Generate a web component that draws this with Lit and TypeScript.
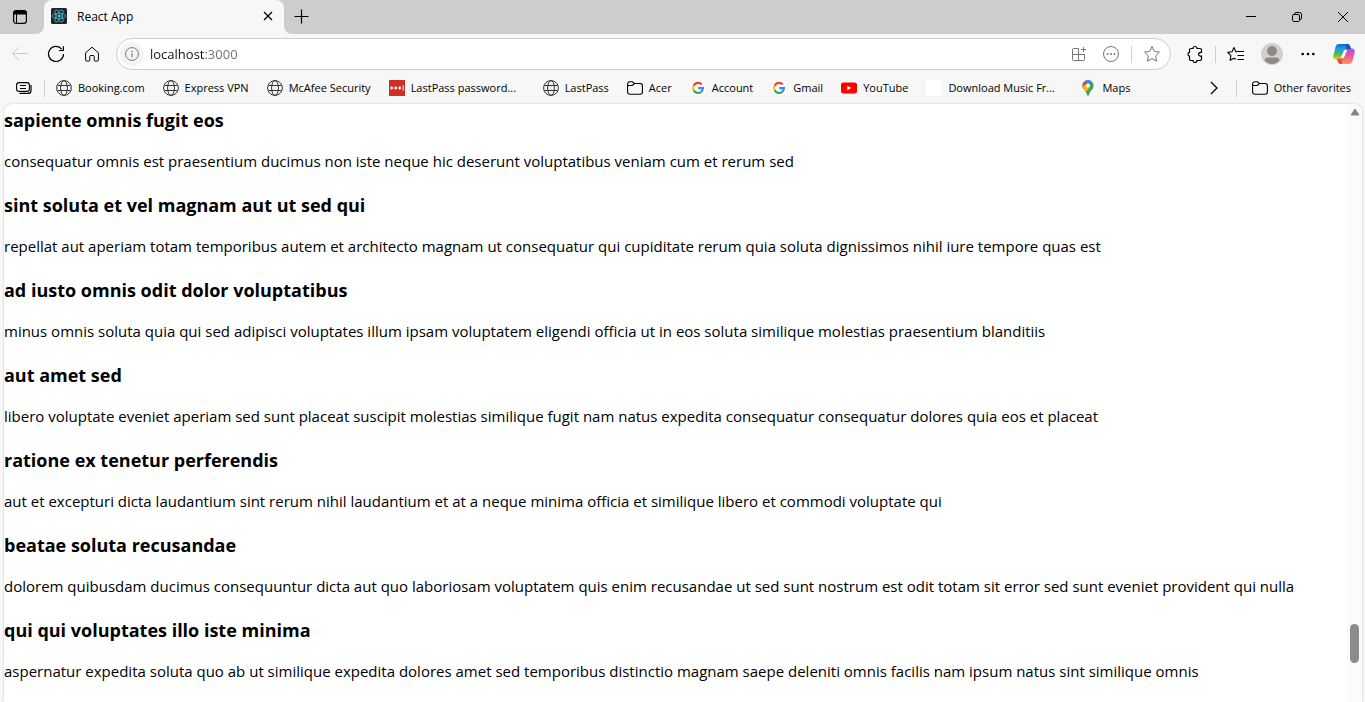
import { LitElement, html, css, svg } from "lit";
import { customElement } from "lit/decorators.js";
import { classMap } from "lit/directives/class-map.js";

const box = (w: number, h: number, body: unknown) =>
  html`<svg width=${w} height=${h} viewBox="0 0 ${w} ${h}" fill="none" stroke="currentColor" aria-hidden="true">${body}</svg>`;

const icons = {
  tabActions: box(16, 16, svg`<rect x="1.600" y="1.600" width="12.800" height="12.800" rx="2.600" stroke-width="1.200"/><path d="M1.600 5V4a2.400 2.400 0 0 1 2.400-2.400h8A2.400 2.400 0 0 1 14.400 4v1z" fill="currentColor"/><path d="M4.500 5v9.400"/>`),
  react: box(16, 16, svg`<rect width="16" height="16" rx="1.500" fill="#20232a" stroke="none"/><g stroke="#4fb4cf" stroke-width=".8"><ellipse cx="8" cy="8" rx="6.800" ry="2.700"/><ellipse cx="8" cy="8" rx="6.800" ry="2.700" transform="rotate(60 8 8)"/><ellipse cx="8" cy="8" rx="6.800" ry="2.700" transform="rotate(120 8 8)"/></g><circle cx="8" cy="8" r="1.300" fill="#61dafb" stroke="none"/>`),
  close: box(10, 10, svg`<path d="M1 1l8 8M9 1L1 9" stroke-width="1.300"/>`),
  plus: box(16, 16, svg`<path d="M8.500 1.500v14M1.500 8.500h14" stroke-width="1.200"/>`),
  minimize: box(10, 10, svg`<path d="M0 4.500h10"/>`),
  restore: box(10, 10, svg`<rect x=".5" y="2.500" width="7" height="7" rx="1.300"/><path d="M2.500 2.500V2A1.500 1.500 0 0 1 4 .5h3.500a2 2 0 0 1 2 2V6A1.500 1.500 0 0 1 8 7.500h-.5"/>`),
  winClose: box(10, 10, svg`<path d="M0 0l10 10M10 0L0 10"/>`),
  back: box(18, 16, svg`<path d="M17 7.500H1.500M8 1L1.500 7.500 8 14"/>`),
  reload: box(18, 18, svg`<path d="M16.500 9A7.500 7.500 0 1 1 14.800 4.200M16.400 1.200v4.300h-4.300" stroke-width="1.200"/>`),
  home: box(16, 16, svg`<path d="M1.600 6.900 8 1.200l6.400 5.700v7.200a1 1 0 0 1-1 1h-2.300a.9.9 0 0 1-.9-.9V10.500a1 1 0 0 0-1-1H6.800a1 1 0 0 0-1 1v3.700a.9.900 0 0 1-.9.900H2.600a1 1 0 0 1-1-1z"/>`),
  info: box(14, 14, svg`<circle cx="7" cy="7" r="6.400"/><path d="M7 6.300v4" stroke-width="1.200"/><circle cx="7" cy="4.200" r=".8" fill="currentColor" stroke="none"/>`),
  apps: box(16, 16, svg`<path d="M7.500 2.500h-5a1 1 0 0 0-1 1v10a1 1 0 0 0 1 1h10a1 1 0 0 0 1-1v-5h-12M7.500 14.500v-12M12.500 1v5M10 3.500h5"/>`),
  more: box(16, 16, svg`<circle cx="8" cy="8" r="7.500"/><g fill="currentColor" stroke="none"><circle cx="4.500" cy="8" r="1"/><circle cx="8" cy="8" r="1"/><circle cx="11.500" cy="8" r="1"/></g>`),
  star: box(18, 18, svg`<path d="M9 1.500l2.300 4.900 5.200.7-3.800 3.700.9 5.300L9 13.600l-4.600 2.500.9-5.300L1.500 7.100l5.200-.7z" stroke-linejoin="round"/>`),
  puzzle: box(18, 18, svg`<path d="M5 3.500h2a2 2 0 1 1 4 0h3a1.500 1.500 0 0 1 1.500 1.500v2.400h-1a1.900 1.900 0 1 0 0 3.800h1V14a1.500 1.500 0 0 1-1.500 1.500h-3a2 2 0 0 1-4 0H5A1.500 1.500 0 0 1 3.500 14v-2.800a2 2 0 0 1 0-3.900V5A1.500 1.500 0 0 1 5 3.500z" stroke-width="1.200"/>`),
  favorites: box(18, 16, svg`<path d="M9.500 6H9L7 1.500 5 5.700l-4.300.7 3.200 3.200-.8 4.700L7 12.200l2 1M9.500 5.500h7.500M10.500 9.500H17M10.500 13.500H17" stroke-width="1.100" stroke-linejoin="round"/>`),
  avatar: box(22, 22, svg`<g stroke="none"><circle cx="11" cy="11" r="11" fill="#d2d0ce"/><circle cx="11" cy="8" r="5" fill="#8d8986"/><path d="M3.500 17.500Q4 14.500 7 14.500h8q3 0 3.500 3a10 10 0 0 1-15 0z" fill="#8d8986"/></g>`),
  dots: box(14, 4, svg`<g fill="currentColor" stroke="none"><circle cx="1.700" cy="2" r="1.300"/><circle cx="7" cy="2" r="1.300"/><circle cx="12.300" cy="2" r="1.300"/></g>`),
  copilot: box(22, 22, svg`<defs><linearGradient id="a" x1="0" y1="0" x2="0" y2="1"><stop offset="0" stop-color="#1763d8"/><stop offset=".35" stop-color="#1aa5e0"/><stop offset=".65" stop-color="#54b84c"/><stop offset="1" stop-color="#f4cf10"/></linearGradient><linearGradient id="b" x1="0" y1="0" x2="0" y2="1"><stop offset="0" stop-color="#a052e8"/><stop offset=".5" stop-color="#ee5a96"/><stop offset="1" stop-color="#fb9a4b"/></linearGradient></defs><g stroke="none"><path d="M6.200 1h8a3 3 0 0 1 2.800 2l1 3.500h-3.500a3 3 0 0 0-2.800 2L9.500 14.500Q8.800 16.500 6.800 16.500H3Q0 16.500.300 13L2.500 4Q3.300 1 6.200 1z" fill="url(#a)"/><path d="M15.800 21h-8A3 3 0 0 1 5 19l-1-3.500h3.500a3 3 0 0 0 2.800-2L12.500 7.500Q13.200 5.500 15.200 5.500H19Q22 5.500 21.700 9L19.500 18Q18.700 21 15.800 21z" fill="url(#b)"/><path d="M12.800 1h1.400A3 3 0 0 1 17 3l1 3h-4.500z" fill="#1450c8"/><path d="M9.200 21H7.800A3 3 0 0 1 5 19l-1-3h4.500z" fill="#ef4a3c"/><path d="M11.200 7h3l-3.400 8h-3z" fill="#fff"/></g>`),
  stack: box(16, 14, svg`<rect x=".6" y="1.600" width="12.800" height="8.800" rx="2.500" stroke-width="1.100"/><path d="M15 4v5.400a3 3 0 0 1-3 3H3.500" stroke-width="1.200"/><path d="M4 4.500h6M4 7.500h6"/>`),
  globe: box(16, 16, svg`<g stroke="#333"><circle cx="8" cy="8" r="7.400"/><ellipse cx="8" cy="8" rx="3.400" ry="7.400"/><path d="M1.500 5.500h13M1.500 10.500h13"/></g>`),
  lastpass: box(16, 16, svg`<rect width="16" height="16" fill="#d32d27" stroke="none"/><g fill="#fff" stroke="none"><circle cx="2.700" cy="8" r="1.400"/><circle cx="6.700" cy="8" r="1.400"/><circle cx="10.700" cy="8" r="1.400"/><path d="M13.700 5.200h.9v5.600h-.9z"/></g>`),
  folder: box(16, 16, svg`<path d="M.6 12V4a2.200 2.200 0 0 1 2.200-2.200h2.700L7.500 3.500h5.700a2.200 2.200 0 0 1 2.200 2.200V12a2.200 2.200 0 0 1-2.200 2.200H2.800A2.200 2.200 0 0 1 .6 12zM.6 5.500h4.600l2.300-2" stroke-width="1.100"/>`),
  google: box(16, 16, svg`<circle cx="8" cy="8" r="8" fill="#fff" stroke="none"/><g stroke-width="2.200"><path d="M11.700 4.400A5 5 0 0 0 3.600 5.700" stroke="#ea4335"/><path d="M3.600 5.700a5 5 0 0 0 0 4.600" stroke="#fbbc05"/><path d="M3.600 10.300a5 5 0 0 0 7.700 1.500" stroke="#34a853"/><path d="M11.300 11.800A5 5 0 0 0 13 8.100H8.200" stroke="#4285f4"/></g>`),
  youtube: box(16, 16, svg`<rect y="2.500" width="16" height="11" rx="2.500" fill="#f00" stroke="none"/><path d="M6.300 5.700v4.600l4-2.300z" fill="#fff" stroke="none"/>`),
  blank: box(16, 16, svg`<rect width="16" height="16" fill="#fff" stroke="none"/>`),
  maps: box(16, 16, svg`<defs><clipPath id="p"><path d="M8 0a5.600 5.600 0 0 1 5.600 5.600c0 3-2 4-3.400 6.200C9.200 13.300 9 16 8 16s-1.200-2.700-2.200-4.200C4.400 9.600 2.400 8.600 2.400 5.600A5.600 5.600 0 0 1 8 0z"/></clipPath></defs><g clip-path="url(#p)" stroke="none"><path d="M0 0h16v16H0z" fill="#34a853"/><path d="M4 0h8.700L8 5.600z" fill="#4285f4"/><path d="M0 0h4l4 5.600L2 9H0z" fill="#ea4335"/><path d="M0 12V8.800L5 4.500l4.500 3.200L5 13z" fill="#fbbc04"/></g><circle cx="8" cy="5.600" r="2" fill="#fff" stroke="none"/>`),
  chevron: box(8, 14, svg`<path d="M1 1l6 6-6 6" stroke-width="1.300"/>`),
  scrollUp: box(10, 8, svg`<path d="M5 1 9 7H1z" fill="currentColor" stroke-linejoin="round"/>`),
};

type IconName = keyof typeof icons;

const bookmarks: { icon: IconName; label: string; long?: boolean }[] = [
  { icon: "globe", label: "Booking.com" },
  { icon: "globe", label: "Express VPN" },
  { icon: "globe", label: "McAfee Security" },
  { icon: "lastpass", label: "LastPass password...", long: true },
  { icon: "globe", label: "LastPass" },
  { icon: "folder", label: "Acer" },
  { icon: "google", label: "Account" },
  { icon: "google", label: "Gmail" },
  { icon: "youtube", label: "YouTube" },
  { icon: "blank", label: "Download Music Fr...", long: true },
  { icon: "maps", label: "Maps" },
];

const posts = [
  ["sapiente omnis fugit eos", "consequatur omnis est praesentium ducimus non iste neque hic deserunt voluptatibus veniam cum et rerum sed"],
  ["sint soluta et vel magnam aut ut sed qui", "repellat aut aperiam totam temporibus autem et architecto magnam ut consequatur qui cupiditate rerum quia soluta dignissimos nihil iure tempore quas est"],
  ["ad iusto omnis odit dolor voluptatibus", "minus omnis soluta quia qui sed adipisci voluptates illum ipsam voluptatem eligendi officia ut in eos soluta similique molestias praesentium blanditiis"],
  ["aut amet sed", "libero voluptate eveniet aperiam sed sunt placeat suscipit molestias similique fugit nam natus expedita consequatur consequatur dolores quia eos et placeat"],
  ["ratione ex tenetur perferendis", "aut et excepturi dicta laudantium sint rerum nihil laudantium et at a neque minima officia et similique libero et commodi voluptate qui"],
  ["beatae soluta recusandae", "dolorem quibusdam ducimus consequuntur dicta aut quo laboriosam voluptatem quis enim recusandae ut sed sunt nostrum est odit totam sit error sed sunt eveniet provident qui nulla"],
  ["qui qui voluptates illo iste minima", "aspernatur expedita soluta quo ab ut similique expedita dolores amet sed temporibus distinctio magnam saepe deleniti omnis facilis nam ipsum natus sint similique omnis"],
];

@customElement("app-root")
export class AppRoot extends LitElement {
  static styles = css`
    :host {
      display: flex;
      flex-direction: column;
      height: 100vh;
      overflow: hidden;
      background: #f7f7f7;
      color: #000;
      font-family: "Open Sans", "Noto Sans", sans-serif;
      font-size: 12px;
    }
    * { box-sizing: border-box; }
    svg { display: block; flex: none; }
    button {
      display: flex;
      align-items: center;
      justify-content: center;
      flex: none;
      padding: 0;
      border: 0;
      background: none;
      color: inherit;
      font: inherit;
    }
    .tabs { display: flex; height: 34px; flex: none; background: #cdcdcd; }
    .actions { width: 44px; padding-right: 4px; border-bottom-right-radius: 8px; background: #cdcdcd; }
    .corner { background: #f7f7f7; display: flex; }
    .tab {
      display: flex;
      align-items: center;
      width: 240px;
      padding: 0 6px 2px 7px;
      border-radius: 8px 8px 0 0;
      background: #f7f7f7;
    }
    .title { flex: 1; padding-left: 10px; }
    .tab button { width: 20px; height: 20px; }
    .rest { display: flex; flex: 1; border-bottom-left-radius: 8px; background: #cdcdcd; }
    .strip { display: flex; flex: 1; background: #f7f7f7; }
    .new { width: 34px; height: 32px; }
    .windows { display: flex; margin-left: auto; }
    .windows button { width: 46px; }
    .windows button:last-child { width: 45px; }
    .toolbar { display: flex; align-items: center; flex: none; height: 40px; padding: 0 1px 0 2px; }
    .tool { width: 36px; height: 32px; }
    .off { color: #c8c8c8; }
    .address {
      display: flex;
      align-items: center;
      flex: 1;
      height: 32px;
      margin: 0 8px 0 6px;
      padding: 0 2px 0 3px;
      border: 1px solid #cfcfcf;
      border-radius: 16px;
      background: #fff;
      color: #767676;
    }
    .site { width: 24px; height: 24px; border-radius: 12px; background: #f4f4f4; }
    .url {
      flex: 1;
      min-width: 0;
      padding: 0 0 0 6px;
      border: 0;
      outline: 0;
      font: inherit;
      font-size: 13px;
      line-height: 20px;
      color: transparent;
      background: linear-gradient(90deg, #111 61px, #6e6e6e 61px);
      -webkit-background-clip: text;
      background-clip: text;
    }
    .small { width: 32px; height: 28px; }
    .line { width: 1px; height: 17px; flex: none; margin: 0 4px; background: #cfcfcf; }
    .wide { width: 40px; height: 32px; }
    .bookmarks { display: flex; align-items: center; flex: none; height: 30px; padding: 0 14px 2px 16px; font-size: 11px; }
    .list { display: flex; gap: 18px; margin-left: 11px; flex: 1; min-width: 0; overflow: hidden; }
    .link { display: flex; align-items: center; gap: 6px; color: inherit; text-decoration: none; white-space: nowrap; line-height: 16px; }
    .long { min-width: 136px; }
    .divider { margin: 0 0 0 12px; }
    .next { width: 20px; height: 20px; }
    .other { margin-left: 15px; }
    .view {
      display: flex;
      flex: 1;
      min-height: 0;
      margin: 0 3px 0 4px;
      overflow: hidden;
      border-radius: 8px 8px 0 0;
      background: #fff;
      box-shadow: 0 0 2px #bbb;
    }
    .page { flex: 1; min-width: 0; overflow: hidden; padding-top: 4px; white-space: nowrap; }
    h3 { margin: 0 0 17px; font-size: 18px; line-height: 25px; font-weight: 700; }
    p { margin: 0 0 21px; font-size: 15px; line-height: 22px; }
    .scroll { display: flex; flex-direction: column; align-items: center; width: 15px; padding-top: 4px; background: #fbfbfb; color: #858585; }
    .above { flex: 508; }
    .thumb { width: 9px; flex: 39; border-radius: 5px; background: #8b8b8b; }
    .below { flex: 39; }
  `;

  render() {
    return html`
      <header class="tabs">
        <div class="corner"><button class="actions" aria-label="Tab actions">${icons.tabActions}</button></div>
        <div class="tab">${icons.react}<span class="title">React App</span><button aria-label="Close tab">${icons.close}</button></div>
        <div class="strip"><div class="rest">
          <button class="new" aria-label="New tab">${icons.plus}</button>
          <div class="windows">
            <button aria-label="Minimize">${icons.minimize}</button>
            <button aria-label="Restore">${icons.restore}</button>
            <button aria-label="Close">${icons.winClose}</button>
          </div>
        </div></div>
      </header>
      <nav class="toolbar">
        <button class="tool off" aria-label="Back">${icons.back}</button>
        <button class="tool" aria-label="Refresh">${icons.reload}</button>
        <button class="tool" aria-label="Home">${icons.home}</button>
        <div class="address">
          <button class="site" aria-label="Site information">${icons.info}</button>
          <input class="url" aria-label="Address" value="localhost:3000" />
          <button class="small" aria-label="Apps">${icons.apps}</button>
          <button class="small" aria-label="More actions">${icons.more}</button>
          <span class="line"></span>
          <button class="small" aria-label="Favorite this page">${icons.star}</button>
        </div>
        <button class="small" aria-label="Extensions">${icons.puzzle}</button>
        <span class="line"></span>
        <button class="small" aria-label="Favorites">${icons.favorites}</button>
        <button class="wide" aria-label="Profile">${icons.avatar}</button>
        <button class="small" aria-label="Settings">${icons.dots}</button>
        <button class="wide" aria-label="Copilot">${icons.copilot}</button>
      </nav>
      <nav class="bookmarks">
        <button aria-label="Workspaces">${icons.stack}</button>
        <span class="line divider"></span>
        <div class="list">
          ${bookmarks.map((b) => html`<a class=${classMap({ link: true, long: !!b.long })} href="#">${icons[b.icon]}<span>${b.label}</span></a>`)}
        </div>
        <button class="next" aria-label="More bookmarks">${icons.chevron}</button>
        <span class="line divider"></span>
        <a class="link other" href="#">${icons.folder}<span>Other favorites</span></a>
      </nav>
      <main class="view">
        <div class="page">${posts.map(([title, body]) => html`<h3>${title}</h3><p>${body}</p>`)}</div>
        <div class="scroll">${icons.scrollUp}<span class="above"></span><span class="thumb"></span><span class="below"></span></div>
      </main>
    `;
  }
}
